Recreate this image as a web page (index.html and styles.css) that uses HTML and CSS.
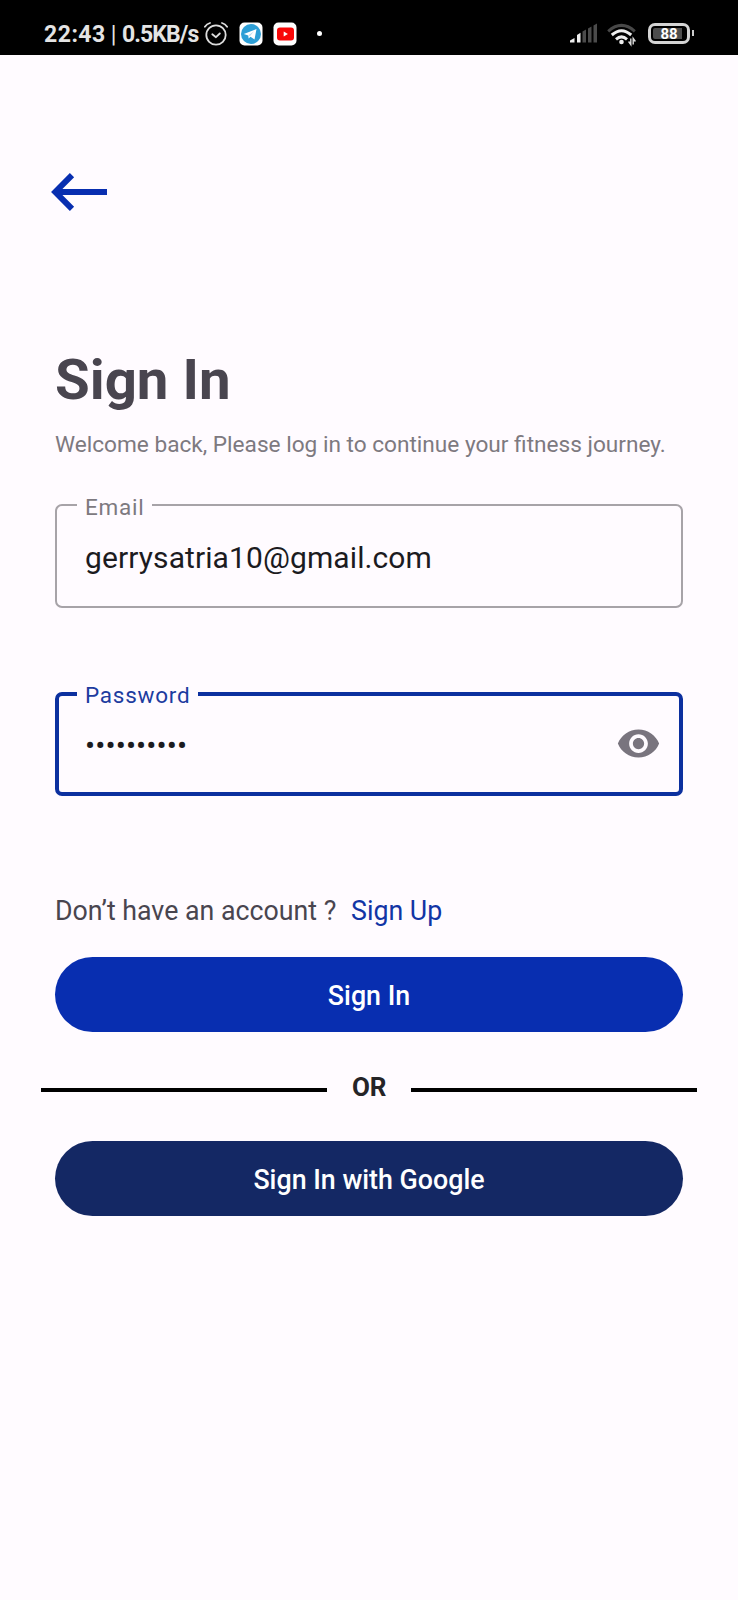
FILE: index.html
```html
<!DOCTYPE html>
<html lang="en">
<head>
<meta charset="utf-8">
<title>Sign In</title>
<link rel="stylesheet" href="styles.css">
</head>
<body>
<header class="status">
  <div class="status-left">
    <span class="clock">22:43</span>
    <span class="bar">|</span>
    <span class="speed">0.5KB/s</span>
    <svg class="alarm" width="24" height="24" viewBox="0 0 24 24" fill="none" stroke="#dcdcdc" stroke-width="1.8" stroke-linecap="round" stroke-linejoin="round">
      <circle cx="12" cy="13" r="9.7"/>
      <path d="M.9 4.7Q2.8 2 6 1M23.100 4.700Q21.200 2 18 1M8.300 12.200l3.700 3 3.800-3.700"/>
    </svg>
    <svg class="telegram" width="24" height="24" viewBox="0 0 24 24">
      <rect x=".5" y=".5" width="23" height="23" rx="5" fill="#fff"/>
      <circle cx="12" cy="12" r="10" fill="#2d9fd6"/>
      <path d="M4.800 12 17.500 7 15.500 17.500 11.500 14.700 9.600 16.500 9.300 13.400Z" fill="#fff"/>
      <path d="M9.500 13.300 15 9.300 11 14" fill="#b9dcef"/>
    </svg>
    <svg class="youtube" width="24" height="24" viewBox="0 0 24 24">
      <rect x=".5" y=".5" width="23" height="23" rx="5" fill="#fff"/>
      <rect x="4" y="5.500" width="17" height="13" rx="3" fill="#f80808"/>
      <path d="M10.700 9.500v5l4.200-2.500z" fill="#fff"/>
    </svg>
    <span class="dot"></span>
  </div>
  <div class="status-right">
    <svg class="signal" width="28" height="20" viewBox="0 0 28 20">
      <path d="M0 19.500V17.500L4.500 15v4.500zM7 19.500V12L10.500 9.800v9.700z" fill="#eee"/>
      <path d="M12.500 19.500V8.500L16 6.500v13zM18 19.500V5.500L21.500 3.500v16zM23.500 19.500V2.500L27 .5v19z" fill="#4b4b4b"/>
    </svg>
    <svg class="wifi" width="30" height="24" viewBox="0 0 30 24" fill="none" stroke-width="3">
      <path d="M1.200 8.300Q14.500-3.500 27.800 8.300" stroke="#484848"/>
      <path d="M4.800 12Q14.500 3.500 24.200 12M9 16.300Q14.500 11.500 20 16.300" stroke="#eee"/>
      <circle cx="14.500" cy="19" r="2.300" fill="#eee"/>
      <path d="M23.800 15.500v6L21.600 18.500M26.200 21.500v-6L28.400 18.500" stroke="#ddd" stroke-width="1.400"/>
    </svg>
    <div class="battery"><span class="battery-level">88</span></div>
    <span class="battery-tip"></span>
  </div>
</header>

<main class="screen">
  <a class="back" href="#" aria-label="Back">
    <svg width="57" height="38" viewBox="0 0 57 38" fill="none" stroke="#082eb0" stroke-width="6">
      <path d="M56 19H5M21 2.200 4.300 19 21 35.800"/>
    </svg>
  </a>
  <h1 class="title">Sign In</h1>
  <p class="subtitle">Welcome back, Please log in to continue your fitness journey.</p>

  <fieldset class="field">
    <legend class="field-label"><span class="label-text">Email</span></legend>
    <span class="value">gerrysatria10@gmail.com</span>
  </fieldset>

  <fieldset class="field field-active">
    <legend class="field-label"><span class="label-text">Password</span></legend>
    <span class="value secret">••••••••••</span>
    <svg class="eye" width="45" height="45" viewBox="0 0 24 24" fill="#79747e">
      <path d="M12 4.500C7 4.500 2.730 7.610 1 12c1.730 4.390 6 7.500 11 7.500s9.270-3.110 11-7.500c-1.730-4.390-6-7.500-11-7.500zM12 17c-2.760 0-5-2.240-5-5s2.240-5 5-5 5 2.240 5 5-2.240 5-5 5zm0-8c-1.660 0-3 1.340-3 3s1.340 3 3 3 3-1.340 3-3-1.340-3-3-3z"/>
    </svg>
  </fieldset>

  <p class="signup"><span class="question">Don’t have an account ?</span><a class="signup-link" href="#">Sign Up</a></p>
  <button class="button" type="button">Sign In</button>
  <div class="divider"><span class="line"></span><span class="or">OR</span><span class="line"></span></div>
  <button class="button button-google" type="button">Sign In with Google</button>
</main>
</body>
</html>
```

FILE: styles.css
```css
* { box-sizing: border-box; }
body {
  margin: 0;
  min-height: 1600px;
  background: #fffbff;
  font-family: Roboto, "Liberation Sans", sans-serif;
  color: #49454f;
}
.status {
  height: 55px;
  padding: 0 44px 0 44px;
  display: flex;
  justify-content: space-between;
  background: #000;
  color: #e4e4e4;
  font-size: 23px;
  line-height: 28px;
  font-weight: 700;
}
.status-left, .status-right { display: flex; align-items: flex-start; white-space: nowrap; }
.clock, .speed, .bar { margin-top: 21px; }
.clock { width: 61px; font-weight: 700; letter-spacing: .5px; }
.bar { width: 17px; text-align: center; font-weight: 400; }
.speed { width: 82px; letter-spacing: -.9px; }
.alarm { margin-top: 22px; }
.telegram { margin: 22px 0 0 11px; }
.youtube { margin: 22px 0 0 10px; }
.dot { width: 5px; height: 5px; margin: 31px 0 0 20px; border-radius: 50%; background: #fff; }
.signal { margin: 23px 0 0; }
.wifi { margin: 23px 0 0 9px; }
.battery {
  width: 42px;
  height: 21px;
  margin: 23px 0 0 11px;
  padding: 2px;
  border: 3px solid #d4d4d4;
  border-radius: 7px;
}
.battery-level {
  display: block;
  height: 11px;
  border-radius: 2px;
  background: linear-gradient(90deg, #4d4d4d 90%, #000 90%);
  color: #fff;
  font-size: 15px;
  font-weight: 700;
  line-height: 12px;
  text-align: center;
}
.battery-tip { width: 2px; height: 6px; margin: 30px 0 0 2px; background: #ccc; }

.screen { padding: 118px 55px 0; }
.back { display: block; width: 57px; height: 38px; margin-left: -4px; }
.back svg { display: block; }
.title { margin: 139px 0 0; font-size: 56.400px; line-height: 60px; font-weight: 700; white-space: nowrap; }
.subtitle { margin: 19px 0 0; font-size: 22.630px; line-height: 32px; color: #7d7980; white-space: nowrap; }

.field {
  position: relative;
  height: 115px;
  margin: 32px 0 0;
  padding: 0 22px 0 28px;
  border: 2px solid #a7a3a8;
  border-radius: 7px;
}
.field-label {
  margin-left: -8px;
  padding: 0 8px;
  height: 24px;
  font-size: 22.500px;
  line-height: 24px;
  letter-spacing: .75px;
  color: #7d7980;
}
.label-text { display: block; padding-top: 2px; }
.value {
  display: block;
  padding-top: 21px;
  font-size: 30px;
  line-height: 40px;
  letter-spacing: .1px;
  color: #1c1b1f;
  white-space: nowrap;
}
.field-active { height: 114px; margin-top: 74px; border: 4px solid #0c309f; padding-left: 26px; }
.field-active .field-label { color: #1d3c9f; }
.field-active .label-text { padding-top: 1px; }
.field-active .value { padding-top: 20px; }
.eye { position: absolute; right: 18px; top: 15px; }

.signup { margin: 95px 0 0; height: 40px; display: flex; font-size: 26.750px; line-height: 40px; white-space: nowrap; }
.question { width: 296px; }
.signup-link { color: #1235a5; text-decoration: none; }
.button {
  display: block;
  width: 100%;
  height: 75px;
  margin: 26px 0 0;
  padding: 3px 0 0;
  border: 0;
  border-radius: 38px;
  background: #082eb0;
  color: #fff;
  font: 500 26.800px/32px Roboto, "Liberation Sans", sans-serif;
}
.divider { display: flex; align-items: center; justify-content: space-between; height: 32px; margin: 39px -14px 0; }
.line { width: 286px; height: 4px; margin-top: 6px; background: #000; }
.or { font-size: 26px; line-height: 32px; font-weight: 700; letter-spacing: -.3px; color: #252427; }
.button-google { margin-top: 38px; background: #142864; }
```
